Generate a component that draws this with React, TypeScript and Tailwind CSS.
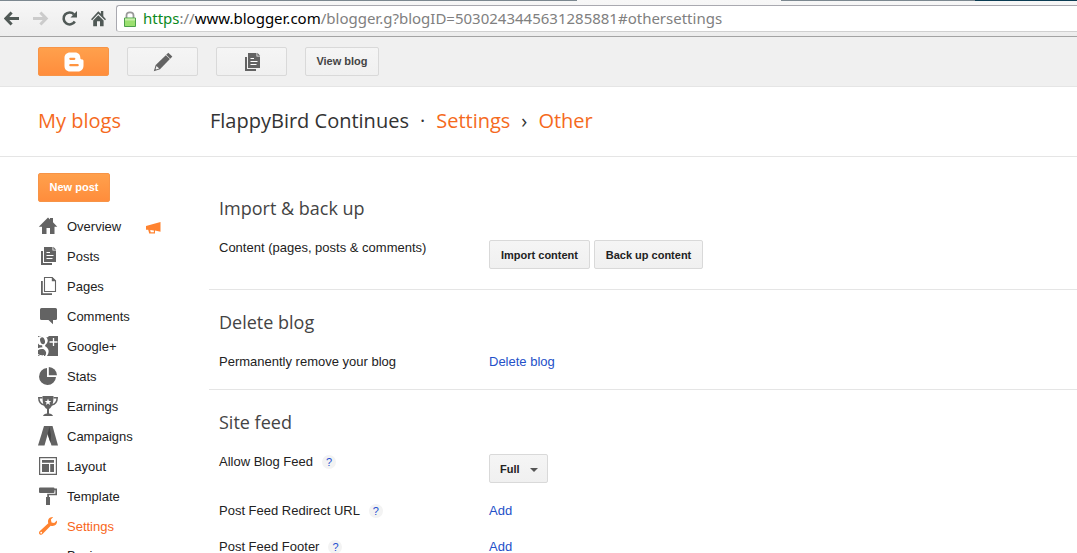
import type { ReactNode } from "react";

const ICON = "#636363";

function Svg({ children, size = 20 }: { children: ReactNode; size?: number }) {
  return (
    <svg width={size} height={size} viewBox={`0 0 ${size} ${size}`} fill={ICON} aria-hidden="true" className="shrink-0">
      {children}
    </svg>
  );
}

const HomeIcon = () => (
  <Svg>
    <path d="M10 1.5 L12 3.4 V2 H15 V6.2 L19.3 10.8 H16.5 V18 H12 V12 H8.5 V18 H4 V10.8 H.8 Z" />
  </Svg>
);

const PostsIcon = () => (
  <Svg>
    <path d="M3 5 H5 V17 H14 V19 H3 Z" />
    <path d="M6 1 H14.5 V4.5 H18 V16 H6 Z" />
    <path d="M15.3 .8 L18.2 3.7 H15.3 Z" />
    <path d="M8.5 6.5 H12 M8.5 9.5 H15.5 M8.5 12.5 H14.5" stroke="#fff" strokeWidth="1.1" />
  </Svg>
);

const PagesIcon = () => (
  <Svg>
    <path d="M3 5 H4.8 V17.2 H14 V19 H3 Z" />
    <path d="M6.5 1.5 H14.2 L17.5 4.8 V15.5 H6.5 Z" fill="#fff" stroke={ICON} strokeWidth="1.1" />
    <path d="M13.8 1 L18 5.2 H13.8 Z" />
  </Svg>
);

const CommentsIcon = () => (
  <Svg>
    <path d="M3.5 2 H17.5 Q19 2 19 3.5 V12.5 Q19 14 17.5 14 H15 V18.3 L10.5 14 H3.5 Q2 14 2 12.5 V3.5 Q2 2 3.5 2 Z" />
  </Svg>
);

const GooglePlusIcon = () => (
  <Svg>
    <path d="M0 0 H20 V20 H0 Z" />
    <path
      fill="#fff"
      fillRule="evenodd"
      d="M0 1.2 C1.600 .2 3 0 5 0 H11 L9.600 1.300 H8.200 C10.400 3.400 10.200 6.400 8 8.200 C6.600 9.400 6.900 10 8.300 11.100 C11.300 13.400 11.300 16.600 9 20 H7 C9 17.400 8.400 15.200 5.800 13.200 C3.400 12.800 1.400 13.200 0 14.200 V12.200 C1.500 11.500 3 11.300 4.700 11.300 C4 10.500 4 9.900 4.300 9.300 C2.300 9.400 .8 8.600 0 7.400 Z M4 1.300 C2.200 1.500 1.700 3 2.200 5 C2.800 7.300 4 8.500 5.500 8.200 C7 7.800 7.400 6.200 6.800 4.200 C6.200 2.200 5.300 1.200 4 1.300 Z"
    />
    <path d="M0 18.500 C2 19.800 4 20 6 19.500" fill="none" stroke="#fff" strokeWidth="1" />
    <path d="M15.500 2 V10 M11.500 6 H19.500" stroke="#fff" strokeWidth="1.300" />
  </Svg>
);

const StatsIcon = () => (
  <Svg>
    <path d="M9 2 V11 H18 A8.5 8.5 0 1 1 9 2 Z" />
    <path d="M10.8 1 A8.4 8.4 0 0 1 19 9.2 H10.8 Z" />
  </Svg>
);

const EarningsIcon = () => (
  <Svg>
    <path d="M4.5 0 H15.5 C15.5 7 14.5 11 11 13 V17.6 C13 17.8 14.5 18.4 15 20 H5 C5.500 18.4 7 17.8 9 17.6 V13 C5.500 11 4.500 7 4.500 0 Z" />
    <path d="M4.5 1.8 H.8 C.8 6 2.800 8.200 6.300 9 M15.500 1.800 H19.200 C19.200 6 17.200 8.200 13.700 9" fill="none" stroke={ICON} strokeWidth="1.5" />
    <path d="M10 2.600 L10.900 4.900 L13.300 5 L11.400 6.500 L12.100 8.900 L10 7.500 L7.900 8.900 L8.600 6.500 L6.700 5 L9.100 4.900 Z" fill="#fff" />
  </Svg>
);

const CampaignsIcon = () => (
  <Svg>
    <path d="M6 0 H12 L6.500 19.500 H0 Z" />
    <path d="M8.500 0 H14.500 L20 19.500 H13.500 L8.800 5.500 Z" />
    <path d="M11.500 .5 L9.500 8 L12.500 17 L13 9 Z" fill="#454545" />
  </Svg>
);

const LayoutIcon = () => (
  <Svg>
    <path d="M1.600 1.600 H18.400 V18.400 H1.600 Z" fill="#fff" stroke={ICON} strokeWidth="1.200" />
    <path d="M4 4 H16 V6.800 H4 Z M4 8 H11 V16 H4 Z M12.200 8 H16 V16 H12.200 Z" />
  </Svg>
);

const TemplateIcon = () => (
  <Svg>
    <path d="M2 1.500 H15.500 Q16.500 1.500 16.500 2.500 H19 V9.300 H11 V11 H12 V19 H8 V11 H9.200 V7.700 H17.400 V4.200 H16.500 V6 Q16.500 7 15.500 7 H2 Q1 7 1 6 V2.500 Q1 1.500 2 1.500 Z" />
  </Svg>
);

const WrenchIcon = () => (
  <Svg>
    <path
      fill="#ff8330"
      d="M15.200 1 L12.900 3.600 L13.500 6.400 L16.200 7 L18.900 4.600 C19.700 8.500 16.400 10.800 12.700 9.700 L4.600 18.100 C3.400 19.400 1 18.800 1 16.700 C1 16 1.300 15.500 1.900 15.100 L10.300 7.300 C9.200 3.600 11.600 .6 15.200 1 Z"
    />
    <circle cx="3.200" cy="16.700" r=".9" fill="#fff" />
  </Svg>
);

const MegaphoneIcon = () => (
  <svg width="15" height="12" viewBox="0 0 15 12" fill="#ff8330" aria-hidden="true">
    <path d="M0 4 L14.500 0 V9.800 L9 8.400 V11.500 H3.200 L2.200 7.800 H0 Z" />
    <path d="M4.200 8 L7.900 8.500 V10.300 H4.700 Z" fill="#fff" />
  </svg>
);

const BloggerIcon = () => (
  <svg width="20" height="20" viewBox="0 0 20 20" aria-hidden="true">
    <path
      fill="#fff"
      d="M6 .5 H11 C14.500 .5 16.300 3 16.300 5.500 C16.300 7 16.800 7.400 18 7.400 C19.200 7.400 19.500 8 19.500 9 V13.500 C19.500 17 17.300 19.500 14 19.500 H6 C2.700 19.500 .5 17.200 .5 14 V6 C.5 2.800 2.700 .5 6 .5 Z"
    />
    <path d="M6.300 6.800 H10.300 M6.300 13.200 H13.700" stroke="#ff9440" strokeWidth="2.200" strokeLinecap="round" />
  </svg>
);

const PencilIcon = () => (
  <Svg>
    <path d="M15.300 .8 L19.300 4.600 L17.300 6.700 L13.200 2.800 Z" />
    <path d="M12.800 3.200 L16.900 7.100 L7 17.200 L.8 19.300 L2.700 13 Z" />
    <path d="M3.500 14 L6.200 16.600 L3 17.500 L2.600 16.900 Z" fill="#f2f2f2" />
  </Svg>
);

const stroked = "fill-none stroke-[#505956]";

function BrowserBar() {
  return (
    <div className="shrink-0 border-b border-[#a3a3a3] bg-linear-to-b from-[#f7f7f7] to-[#ededed]">
      <div className="flex h-px">
        <div className="w-[53.6%] bg-[#7c8890]" />
        <div className="w-[18.9%]" />
        <div className="w-[18%] bg-[#7c8890]" />
        <div className="flex-1 bg-[#0b3c53]" />
      </div>
      <div className="flex items-start pt-1 pb-1">
        <div className="flex h-[27px] items-center gap-3 pr-2 pl-1">
          <button aria-label="Back" className="h-[18px] w-[17px]">
            <svg width="17" height="18" viewBox="0 0 17 18" className={stroked} strokeWidth="3">
              <path d="M15 8.500 H2 M7.600 2.500 L1.800 8.500 L7.600 14.500" />
            </svg>
          </button>
          <button aria-label="Forward" className="h-[18px] w-[17px]" disabled>
            <svg width="17" height="18" viewBox="0 0 17 18" fill="none" stroke="#cbcbcb" strokeWidth="3">
              <path d="M0 8.500 H13 M7.400 2.500 L13.200 8.500 L7.400 14.500" />
            </svg>
          </button>
          <button aria-label="Reload" className="h-[18px] w-[17px]">
            <svg width="17" height="18" viewBox="0 0 17 18" className={stroked} strokeWidth="2.600">
              <path d="M12 4.300 A6 6 0 1 0 12.800 11.500" />
              <path d="M15 1 V7.500 H8.500 Z" fill="#505956" stroke="none" />
            </svg>
          </button>
          <button aria-label="Home" className="h-[18px] w-[17px]">
            <svg width="17" height="18" viewBox="0 0 17 18" fill="#505956">
              <path d="M7.300 1.200 L9.900 3.800 V1 H12.300 V6.200 L15 9.200 L14 10.200 L7.300 3.800 L1.200 10.200 L0 9.200 Z" />
              <path d="M7.300 5.200 L12.600 10.400 V16.200 H9 V11.200 H6 V16.200 H2.200 V10.400 Z" />
            </svg>
          </button>
        </div>
        <div className="flex h-[27px] flex-1 items-center gap-[7px] rounded-l-[3px] border border-r-0 border-[#a9a9b0] border-b-[#d0d0d0] bg-white pl-[7px]">
          <svg width="12" height="16" viewBox="0 0 12 16" aria-hidden="true">
            <path d="M2.500 8 V4.500 Q2.500 1.300 6 1.300 Q9.500 1.300 9.500 4.500 V8" fill="none" stroke="#999" strokeWidth="1.800" />
            <path d="M.5 7 H11.500 V15.500 H.5 Z" fill="#9be070" stroke="#4da04a" />
            <path d="M1 7.500 H11 V9.500 H1 Z" fill="#c8efac" />
          </svg>
          <div
            role="textbox"
            aria-label="Address"
            contentEditable
            suppressContentEditableWarning
            className="flex-1 pb-0.5 font-['Noto_Sans',sans-serif] text-[15px] leading-5 whitespace-nowrap text-[#808080] outline-none"
          >
            <span className="text-[#0c8a1c]">https</span>://<span className="text-black">www.blogger.com</span>
            /blogger.g?blogID=5030243445631285881#othersettings
          </div>
        </div>
      </div>
    </div>
  );
}

const buttonBase = "flex h-[29px] items-center justify-center rounded-[2px] border text-[11px] font-bold";
const orangeButton = "border-[#f79447] bg-linear-to-b from-[#ffa04c] to-[#ff8d3c] text-white";
const grayButton = "border-[#d9d9d9] bg-linear-to-b from-[#f5f5f5] to-[#f0f0f0]";

function Toolbar() {
  return (
    <div className="flex h-[50px] shrink-0 items-start gap-[18px] border-b border-[#e5e5e5] bg-[#f0f0f0] pt-2.5 pl-[38px]">
      <button aria-label="Blogger" className={`${buttonBase} ${orangeButton} w-[71px]`}>
        <BloggerIcon />
      </button>
      <button aria-label="Create new post" className={`${buttonBase} ${grayButton} w-[71px]`}>
        <PencilIcon />
      </button>
      <button aria-label="Go to post list" className={`${buttonBase} ${grayButton} w-[71px]`}>
        <PostsIcon />
      </button>
      <button className={`${buttonBase} ${grayButton} w-[74px] text-[#444]`}>View blog</button>
    </div>
  );
}

const navItems = [
  { label: "Overview", icon: <HomeIcon />, news: true },
  { label: "Posts", icon: <PostsIcon /> },
  { label: "Pages", icon: <PagesIcon /> },
  { label: "Comments", icon: <CommentsIcon /> },
  { label: "Google+", icon: <GooglePlusIcon /> },
  { label: "Stats", icon: <StatsIcon /> },
  { label: "Earnings", icon: <EarningsIcon /> },
  { label: "Campaigns", icon: <CampaignsIcon /> },
  { label: "Layout", icon: <LayoutIcon /> },
  { label: "Template", icon: <TemplateIcon /> },
  { label: "Settings", icon: <WrenchIcon />, active: true },
];

function Sidebar() {
  return (
    <nav className="w-[209px] shrink-0 pt-4 pl-[38px]">
      <button className={`${buttonBase} ${orangeButton} w-[72px]`}>New post</button>
      <ul className="pt-[9px]">
        {navItems.map((item) => (
          <li key={item.label}>
            <a href="#" className={`flex h-[30px] items-center gap-[9px] ${item.active ? "text-[#f8661b]" : "text-[#222]"}`}>
              {item.icon}
              <span className="pt-0.5">{item.label}</span>
              {item.news && (
                <span className="pt-1 pl-4">
                  <MegaphoneIcon />
                </span>
              )}
            </a>
          </li>
        ))}
        <li>
          <a href="#" className="flex h-[30px] items-center pl-[29px] text-[#222]">
            Basic
          </a>
        </li>
      </ul>
    </nav>
  );
}

function Section({ title, children }: { title: string; children: ReactNode }) {
  return (
    <section className="border-b border-[#e5e5e5] pt-[18px] pb-5 pl-2.5">
      <h2 className="font-['Open_Sans',sans-serif] text-lg leading-7 text-[#444]">{title}</h2>
      <div className="flex flex-col gap-5 pt-[18px]">{children}</div>
    </section>
  );
}

function Row({ label, help, children }: { label: string; help?: boolean; children: ReactNode }) {
  return (
    <div className="flex items-start leading-[15px]">
      <div className="flex w-[270px] shrink-0 items-start gap-[9px]">
        <span>{label}</span>
        {help && (
          <a href="#" aria-label={`Help: ${label}`} className="flex h-4 w-[14px] items-center">
            <span className="h-[14px] w-[14px] rounded-full bg-[#f3f3f3] text-center text-[11px] leading-[14px] text-[#1f4fd0]">?</span>
          </a>
        )}
      </div>
      {children}
    </div>
  );
}

const link = "text-[#2450c8]";

export default function App() {
  return (
    <div className="flex h-screen flex-col overflow-hidden bg-white font-['Liberation_Sans',Arial,sans-serif] text-[13px] text-[#222]">
      <BrowserBar />
      <Toolbar />
      <header className="flex h-[70px] shrink-0 items-center border-b border-[#e5e5e5] pb-0.5 pl-[38px] font-['Open_Sans',sans-serif] text-xl text-[#333]">
        <a href="#" className="w-[172px] text-[#f56a1d]">
          My blogs
        </a>
        <h1 className="flex gap-[11px]">
          <span>FlappyBird Continues</span>
          <span>·</span>
          <a href="#" className="text-[#f56a1d]">
            Settings
          </a>
          <span>›</span>
          <a href="#" className="text-[#f56a1d]">
            Other
          </a>
        </h1>
      </header>
      <div className="flex min-h-0 flex-1">
        <Sidebar />
        <main className="min-w-0 flex-1 pt-[19px]">
          <Section title="Import & back up">
            <Row label="Content (pages, posts & comments)">
              <div className="flex gap-1">
                <button className={`${buttonBase} ${grayButton} w-[101px] pt-0.5`}>Import content</button>
                <button className={`${buttonBase} ${grayButton} w-[109px] pt-0.5`}>Back up content</button>
              </div>
            </Row>
          </Section>
          <Section title="Delete blog">
            <Row label="Permanently remove your blog">
              <a href="#" className={link}>
                Delete blog
              </a>
            </Row>
          </Section>
          <Section title="Site feed">
            <Row label="Allow Blog Feed" help>
              <div className="relative">
                <select
                  aria-label="Allow Blog Feed"
                  defaultValue="Full"
                  className={`${buttonBase} ${grayButton} w-[59px] appearance-none pt-0.5 pl-2.5`}
                >
                  <option>Full</option>
                  <option>None</option>
                </select>
                <svg width="8" height="4" viewBox="0 0 8 4" fill="#555" className="pointer-events-none absolute top-3.5 right-2.5">
                  <path d="M0 0 H8 L4 4 Z" />
                </svg>
              </div>
            </Row>
            <Row label="Post Feed Redirect URL" help>
              <a href="#" className={link}>
                Add
              </a>
            </Row>
            <Row label="Post Feed Footer" help>
              <a href="#" className={link}>
                Add
              </a>
            </Row>
          </Section>
        </main>
      </div>
    </div>
  );
}
